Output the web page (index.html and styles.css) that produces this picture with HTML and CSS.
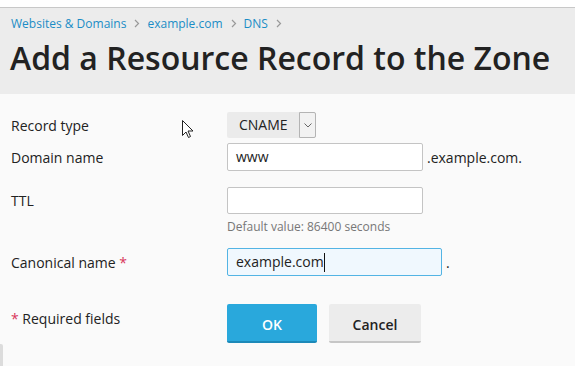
FILE: index.html
```html
<!DOCTYPE html>
<html lang="en">
<head>
<meta charset="utf-8">
<title>Add a Resource Record to the Zone</title>
<link rel="stylesheet" href="styles.css">
</head>
<body>
<div class="topbar"></div>
<header class="page-header">
  <nav class="breadcrumbs">
    <a href="#">Websites &amp; Domains</a>
    <svg class="sep" width="6" height="9" viewBox="0 0 6 9"><path d="M1 1l3.5 3.5L1 8" fill="none" stroke="#999" stroke-width="1.2"/></svg>
    <a href="#">example.com</a>
    <svg class="sep" width="6" height="9" viewBox="0 0 6 9"><path d="M1 1l3.5 3.5L1 8" fill="none" stroke="#999" stroke-width="1.2"/></svg>
    <a href="#">DNS</a>
    <svg class="sep" width="6" height="9" viewBox="0 0 6 9"><path d="M1 1l3.5 3.5L1 8" fill="none" stroke="#999" stroke-width="1.2"/></svg>
  </nav>
  <h1 class="title">Add a Resource Record to the Zone</h1>
</header>
<main class="form">
  <div class="row row-type">
    <div class="label">Record type</div>
    <div class="field">
      <div class="select">
        <span class="select-value">CNAME</span>
        <span class="select-arrow"><svg width="8" height="5" viewBox="0 0 8 5"><path d="M0.5 0.5l3.5 3.5 3.5-3.5" fill="none" stroke="#666" stroke-width="1"/></svg></span>
      </div>
    </div>
  </div>
  <div class="row row-domain">
    <div class="label">Domain name</div>
    <div class="field">
      <div class="input w196">www</div>
      <span class="suffix">.example.com.</span>
    </div>
  </div>
  <div class="row row-ttl">
    <div class="label">TTL</div>
    <div class="field column">
      <div class="input w196"></div>
      <div class="hint">Default value: 86400 seconds</div>
    </div>
  </div>
  <div class="row row-canon">
    <div class="label">Canonical name <span class="req">*</span></div>
    <div class="field">
      <div class="input focused w215">example.com<span class="caret"></span></div>
      <span class="suffix dot">.</span>
    </div>
  </div>
  <div class="row row-buttons">
    <div class="label top"><span class="req">*</span> Required fields</div>
    <div class="field buttons">
      <button class="btn btn-primary">OK</button>
      <button class="btn btn-secondary">Cancel</button>
    </div>
  </div>
</main>
<svg class="cursor" width="13" height="21" viewBox="0 0 13 21"><path d="M1.5 1.5v15l3.5-3.5 2.5 5.5 2-1-2.5-5.5h5z" fill="#fff" stroke="#222" stroke-width="1" stroke-linejoin="miter"/></svg>
<div class="edge"></div>
</body>
</html>
```
FILE: styles.css
```css
* { box-sizing: border-box; }
html, body { margin: 0; padding: 0; }
body {
  width: 575px;
  height: 366px;
  overflow: hidden;
  background: #fafafa;
  font-family: "Open Sans", "DejaVu Sans", sans-serif;
  color: #222;
  position: relative;
}
.topbar {
  height: 8px;
  background: #fff;
  border-bottom: 1px solid #c8c8c8;
}
.page-header {
  background: #ececec;
  height: 86px;
  padding: 7px 11px 0;
}
.breadcrumbs {
  display: flex;
  align-items: center;
  gap: 8px;
  font-size: 12px;
  line-height: 17px;
}
.breadcrumbs a {
  color: #1b8cc6;
  text-decoration: none;
}
.breadcrumbs .sep { margin-right: -1px; }
.title {
  margin: 6px 0 0 -1px;
  font-size: 32px;
  font-weight: 600;
  line-height: 40px;
  color: #222;
  letter-spacing: 0;
  white-space: nowrap;
}
.form {
  padding: 18px 0 0 11px;
  font-size: 14px;
}
.row {
  display: grid;
  grid-template-columns: 216px auto;
  align-items: center;
}
.row-type { margin-bottom: 5px; }
.row-domain { margin-bottom: 16px; }
.row-ttl { margin-bottom: 13px; align-items: start; }
.row-ttl .label { margin-top: 4px; }
.row-canon { margin-bottom: 28px; }
.row-buttons { align-items: start; }
.label { line-height: 19px; }
.label.top { padding-top: 5px; }
.req { color: #d8365a; }
.field {
  display: flex;
  align-items: center;
}
.field.column {
  flex-direction: column;
  align-items: flex-start;
}
.select {
  display: flex;
  height: 26px;
  width: 89px;
  background: #ebebeb;
  border-radius: 2px;
}
.select-value {
  flex: 1;
  line-height: 26px;
  padding-left: 12px;
  font-size: 14px;
}
.select-arrow {
  width: 17px;
  border: 1px solid #b4b4b4;
  background: #f2f2f2;
  display: flex;
  align-items: center;
  justify-content: center;
  border-radius: 0 2px 2px 0;
}
.input {
  height: 28px;
  border: 1px solid #c4c4c4;
  border-radius: 2px;
  background: #fff;
  padding: 0 8px;
  line-height: 26px;
  font-size: 14px;
  display: flex;
  align-items: center;
}
.w196 { width: 196px; }
.w215 { width: 215px; }
.input.focused {
  background: #f0f8fe;
  border-color: #53b4e4;
}
.caret {
  display: inline-block;
  width: 1px;
  height: 19px;
  background: #111;
  margin-left: 0;
}
.row-ttl .input { height: 27px; }
.hint {
  margin-top: 5px;
  font-size: 12px;
  line-height: 16px;
  color: #777;
}
.suffix { margin-left: 4px; }
.suffix.dot { margin-left: 4px; }
.buttons { gap: 12px; align-items: flex-start; }
.btn {
  height: 39px;
  font-family: inherit;
  font-size: 14px;
  font-weight: 600;
  border: 0;
  border-radius: 2px;
  padding: 3px 0 0;
}
.btn-primary {
  width: 90px;
  background: #29a8dc;
  color: #fff;
  border-bottom: 2px solid #1c89b8;
}
.btn-secondary {
  width: 92px;
  background: #ececec;
  color: #222;
  border-bottom: 2px solid #c6c6c6;
}
.cursor {
  position: absolute;
  left: 181px;
  top: 119px;
}
.edge {
  position: absolute;
  left: 0;
  top: 344px;
  width: 3px;
  height: 22px;
  background: #dcdcdc;
  border-radius: 0 2px 0 0;
}
```
